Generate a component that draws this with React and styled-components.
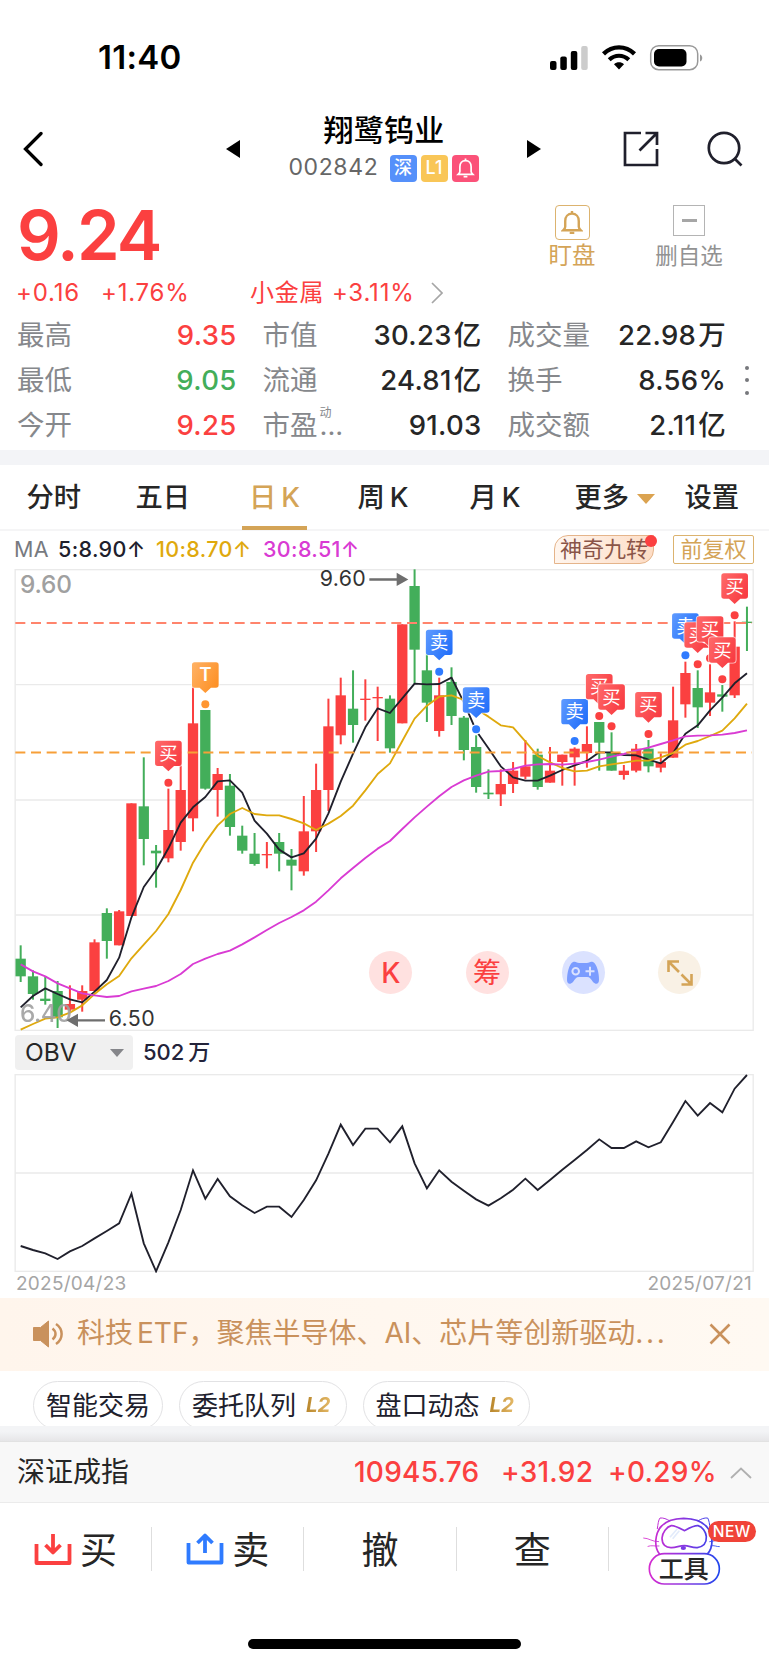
import React from "react";
import styled, { createGlobalStyle } from "styled-components";

const RED = "#fb4040";
const GREEN = "#43ae5a";
const GOLD = "#d4a457";

// one candle: [high, body top, body bottom, low, up?]
const candles = [
  [1141, 1181, 1234, 1251, 0], [1216, 1234, 1287, 1304, 0], [1234, 1301, 1308, 1319, 0],
  [1248, 1278, 1357, 1389, 0], [1261, 1317, 1334, 1340, 1], [1261, 1278, 1304, 1340, 1],
  [1123, 1132, 1278, 1278, 1], [1030, 1044, 1128, 1181, 0], [1035, 1039, 1141, 1141, 1],
  [715, 715, 1053, 1053, 1], [577, 724, 822, 901, 0], [840, 857, 865, 968, 0],
  [671, 795, 880, 892, 1], [600, 675, 831, 857, 1], [364, 475, 760, 799, 1],
  [435, 435, 671, 674, 0], [609, 627, 675, 755, 1], [627, 662, 786, 812, 0],
  [782, 812, 857, 866, 0], [804, 866, 897, 902, 0], [831, 867, 871, 910, 1],
  [804, 831, 866, 919, 0], [852, 884, 902, 976, 0], [693, 799, 919, 932, 1],
  [596, 675, 799, 861, 1], [401, 484, 675, 738, 1], [338, 391, 511, 538, 1],
  [316, 431, 480, 533, 0], [343, 401, 405, 467, 1], [365, 396, 400, 528, 1],
  [391, 401, 550, 563, 0], [178, 178, 475, 475, 1], [13, 63, 254, 356, 0],
  [250, 316, 413, 471, 0], [338, 391, 498, 515, 1], [307, 351, 453, 480, 0],
  [453, 458, 555, 586, 0], [511, 546, 666, 683, 0], [613, 683, 688, 702, 0],
  [613, 657, 688, 723, 1], [591, 617, 657, 684, 1], [525, 604, 635, 643, 1],
  [551, 569, 666, 674, 0], [546, 617, 653, 653, 1], [569, 569, 591, 662, 1],
  [547, 551, 577, 662, 1], [484, 537, 564, 608, 1], [471, 471, 533, 617, 0],
  [502, 564, 617, 617, 0], [600, 617, 630, 644, 1], [537, 551, 617, 622, 1],
  [525, 551, 604, 622, 0], [565, 591, 608, 622, 1], [365, 466, 578, 578, 1],
  [290, 324, 418, 458, 1], [316, 369, 427, 489, 0], [298, 382, 413, 453, 1],
  [360, 388, 395, 440, 0], [169, 245, 391, 399, 1], [125, 170, 174, 258, 0],
];

const ma5 = [
  1327, 1293, 1270, 1287, 1303, 1312, 1280, 1245, 1178, 1057, 966, 915, 850, 773, 727,
  696, 649, 646, 683, 767, 806, 854, 877, 865, 821, 745, 650, 566, 487, 430, 444, 400,
  356, 358, 357, 338, 412, 497, 550, 604, 637, 647, 647, 632, 615, 601, 588, 562, 562,
  570, 571, 584, 595, 564, 506, 481, 436, 398, 355, 325,
];
const ma10 = [
  1394, 1377, 1361, 1357, 1343, 1321, 1287, 1258, 1233, 1180, 1139, 1098, 1047, 975, 893,
  832, 781, 747, 729, 747, 751, 751, 762, 775, 795, 776, 753, 722, 676, 627, 595, 528,
  461, 422, 395, 391, 405, 432, 455, 481, 487, 529, 573, 592, 609, 619, 617, 604, 598,
  593, 587, 587, 577, 564, 539, 528, 513, 497, 460, 416,
];
const ma30 = [
  1198, 1219, 1234, 1255, 1270, 1285, 1291, 1296, 1293, 1279, 1271, 1263, 1248, 1227,
  1197, 1181, 1167, 1157, 1138, 1117, 1095, 1074, 1056, 1036, 1010, 976, 940, 909, 879,
  851, 828, 792, 757, 725, 694, 666, 646, 632, 620, 618, 612, 602, 598, 597, 599, 596,
  591, 584, 575, 567, 556, 548, 537, 526, 514, 512, 511, 509, 504, 496,
];
const obv = [
  648, 660, 670, 687, 664, 648, 625, 603, 580, 491, 640, 724, 637, 540, 421, 506, 447,
  499, 526, 549, 530, 530, 561, 510, 451, 371, 284, 345, 296, 296, 337, 289, 400, 475,
  421, 455, 482, 508, 527, 505, 479, 446, 480, 450, 419, 390, 360, 328, 354, 354, 334,
  352, 337, 276, 213, 257, 219, 247, 176, 135,
];

const trades = [
  { i: 12, y: 527, t: "买" },
  { i: 15, y: 292, t: "T" },
  { i: 34, y: 194, t: "卖" },
  { i: 37, y: 367, t: "卖" },
  { i: 45, y: 402, t: "卖" },
  { i: 47, y: 327, t: "买" },
  { i: 48, y: 358, t: "买" },
  { i: 51, y: 381, t: "买" },
  { i: 54, y: 145, t: "卖" },
  { i: 55, y: 172, t: "买" },
  { i: 56, y: 154, t: "买" },
  { i: 57, y: 217, t: "买" },
  { i: 58, y: 25, t: "买" },
];
const tradeColors = {
  买: { id: "buy", from: "#ff6a6a", to: "#f83c42", dot: "#fb4040" },
  卖: { id: "sell", from: "#5f9bff", to: "#2470fa", dot: "#2f7bff" },
  T: { id: "tt", from: "#ffb266", to: "#fd9228", dot: "#ff9632" },
};

const stats = [
  ["最高", "9.35", RED, "市值", "30.23亿", "成交量", "22.98万"],
  ["最低", "9.05", GREEN, "流通", "24.81亿", "换手", "8.56%"],
  ["今开", "9.25", RED, "市盈", "91.03", "成交额", "2.11亿"],
];

// the charts are drawn at 3 units per px
const cx = (i) => 62 + i * 36.93;
const line = (arr) => arr.map((y, i) => `${cx(i).toFixed(1)},${y}`).join(" ");

// number and its unit, with the small gap between them
const Amount = ({ text }) => {
  const m = text.match(/^([\d.]+)([亿万])$/);
  if (!m) return text;
  return (
    <>
      {m[1]}
      <Unit $gap={2}>{m[2]}</Unit>
    </>
  );
};

const Trade = ({ i, y, t }) => {
  const c = tradeColors[t];
  const x = cx(i);
  return (
    <g>
      <circle cx={x} cy={y + 126} r="16" fill="#fff" />
      <circle cx={x} cy={y + 126} r="12" fill={c.dot} />
      <path
        d={`M${x - 32} ${y} h64 q8 0 8 8 v60 q0 8 -8 8 h-15 l-17 16 l-17 -16 h-15 q-8 0 -8 -8 v-60 q0 -8 8 -8z`}
        fill={`url(#${c.id})`}
        stroke="#fff"
        strokeOpacity="0.75"
        strokeWidth="5"
        paintOrder="stroke"
      />
      <text
        x={x}
        y={y + (t === "T" ? 57 : 58)}
        fontSize={t === "T" ? 56 : 55}
        fontWeight={t === "T" ? 600 : 400}
        fill="#fff"
        textAnchor="middle"
      >
        {t}
      </text>
    </g>
  );
};

const KChart = () => (
  <Drawing $h={462} viewBox="0 12 2307 1386">
    <defs>
      {Object.values(tradeColors).map((c) => (
        <linearGradient key={c.id} id={c.id} x1="0" y1="0" x2="1" y2="0.6">
          <stop offset="0" stopColor={c.from} />
          <stop offset="1" stopColor={c.to} />
        </linearGradient>
      ))}
    </defs>
    <g stroke="#eaeaea" strokeWidth="4" fill="none">
      <rect x="45.5" y="14" width="2214" height="1382" />
      <path d="M46 359H2260M46 705H2260M46 1050H2260" />
    </g>
    {candles.map(([h, t, b, l, up], i) => (
      <g key={i} fill={up ? RED : GREEN}>
        <rect x={cx(i) - 3} y={h} width="6" height={l - h} />
        <rect x={cx(i) - 15.5} y={t} width="31" height={b - t} />
      </g>
    ))}
    <g fill="none" strokeWidth="5.6" strokeLinejoin="round">
      <polyline points={line(ma5)} stroke="#20202c" />
      <polyline points={line(ma10)} stroke="#dfa90d" />
      <polyline points={line(ma30)} stroke="#d93bd3" />
    </g>
    <g strokeWidth="6" strokeDasharray="30 17">
      <path d="M46 174H2256" stroke="#ff846c" />
      <path d="M46 562.5H2256" stroke="#f79f38" />
    </g>
    <g fill="#a0a0a0" fontSize="73" fontWeight="500">
      <text x="60" y="84" textLength="156">9.60</text>
      <text x="60" y="1371" textLength="156" opacity="0.9">6.40</text>
    </g>
    <g fill="#333" fontSize="64">
      <text x="959" y="62" textLength="138">9.60</text>
      <text x="326" y="1384" textLength="138">6.50</text>
    </g>
    <g stroke="#6e6e6e" strokeWidth="7" fill="#6e6e6e">
      <path d="M1108 43.500H1200M216 1366H315" />
      <path stroke="none" d="M1190 23L1225 43.500L1190 63ZM234 1346L199 1366L234 1386Z" />
    </g>
    {trades.map((m) => (
      <Trade key={m.i} {...m} />
    ))}
  </Drawing>
);

const ObvChart = () => (
  <Drawing $h={201} viewBox="0 126 2307 603">
    <g stroke="#eaeaea" strokeWidth="4" fill="none">
      <rect x="45.500" y="134" width="2214" height="590" />
      <path d="M46 429H2260" />
    </g>
    <polyline points={line(obv)} fill="none" stroke="#20202c" strokeWidth="5.6" />
  </Drawing>
);

const BellPath = () => (
  <>
    <path d="M12 3.500c-4 0-6.500 3-6.500 7v5.500c0 1.500-1 2.500-2 3.500h17c-1-1-2-2-2-3.500v-5.500c0-4-2.500-7-6.500-7z" />
    <path d="M12 1v2.500M9.800 22h4.400" />
  </>
);

const Cat = () => (
  <svg width="79" height="70" viewBox="0 0 237 210" fill="none">
    <defs>
      <linearGradient id="cat" gradientUnits="userSpaceOnUse" x1="20" y1="0" x2="232" y2="0">
        <stop offset="0" stopColor="#d62bd0" />
        <stop offset="0.5" stopColor="#8a36e0" />
        <stop offset="1" stopColor="#1f46ee" />
      </linearGradient>
    </defs>
    <g stroke="url(#cat)" strokeWidth="5" strokeLinecap="round" strokeLinejoin="round">
      <path d="M52 113C40 98 40 78 43 62C50 25 78 8 125 7C170 8 200 25 208 60C212 80 210 98 197 113" />
      <path strokeWidth="3" d="M46 38C48 25 49 12 54 6C64 5 74 9 82 14M204 38C203 25 201 12 197 6C187 5 177 9 169 14" />
      <path d="M127 44C112 36 98 28 88 29C74 32 61 50 60 66C60 86 71 96 89 95C105 94 112 89 127 89C142 89 149 96 166 95C184 92 194 80 193 62C192 48 181 32 168 29C156 28 142 36 127 44Z" />
      <path strokeWidth="2.500" d="M5 66C20 66 32 78 50 77M18 91C28 87 38 91 51 90M203 77C214 75 222 74 228 72M206 90C216 86 224 93 232 92" />
      <rect x="22" y="113" width="210" height="91" rx="45" />
    </g>
    <path d="M84 64L106 38M92 68L112 44" stroke="#e2ebfb" strokeWidth="5" />
    <ellipse cx="124" cy="96" rx="8" ry="6" fill="#7a3be4" />
  </svg>
);

const App = () => {
  return (
    <>
      <GlobalStyle />
      <Page>
        <StatusBar>
          <Clock>11:40</Clock>
          <svg width="156" height="28" viewBox="0 0 156 28">
            <rect x="1" y="17" width="6.500" height="9" rx="2" />
            <rect x="11.300" y="12.500" width="6.500" height="13.500" rx="2" />
            <rect x="21.800" y="7" width="6.500" height="19" rx="2" />
            <rect x="32.200" y="2" width="6.500" height="24" rx="2" fill="#ccc" />
            <g fill="none" stroke="#000">
              <path d="M54.500 9.800C63.500 1.200 76.500 1.200 85.500 9.800" strokeWidth="4.400" />
              <path d="M60.200 15.800C66 10.400 74 10.400 79.800 15.800" strokeWidth="4.200" />
            </g>
            <path d="M65 20.200C68 17.600 72 17.600 75 20.200L70 25.500Z" />
            <rect x="101.700" y="1.700" width="47" height="24" rx="8" fill="none" stroke="#999" strokeWidth="1.500" />
            <rect x="105" y="5" width="32.500" height="17.500" rx="5" />
            <path d="M151 10.500c3 1 3 6 0 7z" fill="#999" />
          </svg>
        </StatusBar>

        <Header>
          <BackIcon viewBox="0 0 20 36">
            <path d="M18 2.500L2.500 18L18 33.500" />
          </BackIcon>
          <PrevIcon viewBox="0 0 14 18">
            <path d="M0 9L14 0V18Z" />
          </PrevIcon>
          <TitleBox>
            <StockName>翔鹭钨业</StockName>
            <CodeRow>
              <Code>002842</Code>
              <Badge $bg="#5590fa">深</Badge>
              <Badge $bg="#f9c657">L1</Badge>
              <Badge $bg="#fb5279">
                <svg width="19" height="22" viewBox="1 0 22 24" fill="none" stroke="#fff" strokeWidth="2">
                  <BellPath />
                </svg>
              </Badge>
            </CodeRow>
          </TitleBox>
          <NextIcon viewBox="0 0 14 18">
            <path d="M14 9L0 0V18Z" />
          </NextIcon>
          <ShareIcon viewBox="0 0 36 36">
            <path d="M18 2H2V34H34V18M22.500 2H34V14M34 2L16.500 19.500" />
          </ShareIcon>
          <SearchIcon viewBox="0 0 36 36">
            <circle cx="17" cy="17" r="15.200" />
            <path d="M27.500 27.500L34.500 34.500" />
          </SearchIcon>
        </Header>

        <PriceRow>
          <Price>9.24</Price>
          <Watch>
            <WatchBox>
              <svg width="22" height="25" viewBox="1.500 0 21 24" fill="none" stroke={GOLD} strokeWidth="2.300">
                <BellPath />
              </svg>
            </WatchBox>
            <span>盯盘</span>
          </Watch>
          <Remove>
            <RemoveBox />
            <span>删自选</span>
          </Remove>
        </PriceRow>
        <ChangeRow>
          <Change $w={85}>+0.16</Change>
          <Change $w={149}>+1.76%</Change>
          <Change $w={181}>小金属 +3.11%</Change>
          <svg width="12" height="22" viewBox="0 0 12 22" fill="none" stroke="#a6a6a6" strokeWidth="1.700">
            <path d="M1 1L11 11L1 21" />
          </svg>
        </ChangeRow>

        <StatsWrap>
          <StatsGrid>
            {stats.map((s, i) => (
              <React.Fragment key={s[0]}>
                <StatLabel>{s[0]}</StatLabel>
                <StatValue $color={s[2]}>{s[1]}</StatValue>
                <StatLabel>
                  {s[3]}
                  {i === 2 && (
                    <Suffix>
                      ...<Dyn>动</Dyn>
                    </Suffix>
                  )}
                </StatLabel>
                <StatValue>
                  <Amount text={s[4]} />
                </StatValue>
                <StatLabel>{s[5]}</StatLabel>
                <StatValue>
                  <Amount text={s[6]} />
                </StatValue>
              </React.Fragment>
            ))}
          </StatsGrid>
          <MoreDots>
            <i />
            <i />
            <i />
          </MoreDots>
        </StatsWrap>
        <Band />

        <Tabs>
          <Tab $w={109}>分时</Tab>
          <Tab $w={106}>五日</Tab>
          <ActiveTab>日<K>K</K></ActiveTab>
          <Tab $w={112} $ml={51}>周<K>K</K></Tab>
          <Tab $w={105}>月<K>K</K></Tab>
          <Tab $w={110}>
            更多
            <Caret $w={19} $h={10} $c="#dba350" $ml={8} />
          </Tab>
          <Tab $w={60}>设置</Tab>
        </Tabs>

        <MaRow>
          <Ma $w={44} $c="#777a80">MA</Ma>
          <Ma $w={98} $c="#20202c" $b>5:8.90↑</Ma>
          <Ma $w={107} $c="#dfa90d" $b>10:8.70↑</Ma>
          <Ma $w={291} $c="#d93bd3" $b>30:8.51↑</Ma>
          <NineTag>神奇九转</NineTag>
          <AdjustTag>前复权</AdjustTag>
        </MaRow>

        <ChartBox>
          <KChart />
          <FloatTools>
            <RoundTool $bg="#ffe1e0">K</RoundTool>
            <RoundTool $bg="#ffe1e0" $light>筹</RoundTool>
            <RoundTool $bg="#dbe2ff">
              <svg width="32" height="24" viewBox="0 0 32 24">
                <path
                  d="M6 1C9 0 10 2 12 2h8c2 0 3-2 6-1c4 2 6 11 6 18c0 4-3 5-6 2c-2-3-3-5-6-5h-8c-3 0-4 2-6 5c-3 3-6 2-6-2C0 12 2 3 6 1z"
                  fill="#7b9cff"
                />
                <circle cx="8.700" cy="10.300" r="3.300" fill="none" stroke="#dbe2ff" strokeWidth="2" />
                <path d="M23 5.800v9M18.500 10.300h9" stroke="#dbe2ff" strokeWidth="2" />
              </svg>
            </RoundTool>
            <RoundTool $bg="#f9f1e5">
              <svg width="26" height="26" viewBox="0 0 26 26" fill="none" stroke={GOLD} strokeWidth="2.600">
                <path d="M1.500 12V1.500H12M1.500 1.500L12 12M14.500 24.500H24.500V14M14.500 14.500L24.500 24.500" />
              </svg>
            </RoundTool>
          </FloatTools>
        </ChartBox>

        <ObvRow>
          <ObvSelect>
            OBV
            <Caret $w={15} $h={8} $c="#85868a" $ml={0} />
          </ObvSelect>
          <ObvValue>
            502<Unit>万</Unit>
          </ObvValue>
        </ObvRow>
        <ObvChart />
        <Dates>
          <span>2025/04/23</span>
          <span>2025/07/21</span>
        </Dates>

        <Banner>
          <svg width="33" height="28" viewBox="0 0 33 28" fill="none" stroke="#c9915c" strokeWidth="2.500">
            <path d="M1.500 7.500h7L16.500 1v26l-8-6.500h-7z" fill="#c9915c" strokeWidth="1" />
            <path d="M20.500 8.500c4 3 4 8 0 11M24 4c7.500 5 7.500 15 0 20" />
          </svg>
          <BannerText>
            科技<Unit>ETF</Unit>，聚焦半导体、AI、芯片等创新驱动<Ellipsis>...</Ellipsis>
          </BannerText>
          <svg width="22" height="22" viewBox="0 0 22 22" stroke="#c9915c" strokeWidth="2.600">
            <path d="M1.500 1.500L20.500 20.500M20.500 1.500L1.500 20.500" />
          </svg>
        </Banner>

        <Pills>
          <Pill $w={130}>智能交易</Pill>
          <Pill $w={167.5}>
            委托队列<Level>L2</Level>
          </Pill>
          <Pill $w={167.5}>
            盘口动态<Level>L2</Level>
          </Pill>
        </Pills>
        <Band $shade />

        <IndexBar>
          <IndexName>深证成指</IndexName>
          <IndexNum $w={147}>10945.76</IndexNum>
          <IndexNum $w={107}>+31.92</IndexNum>
          <IndexNum $w={122}>+0.29%</IndexNum>
          <svg width="22" height="12" viewBox="0 0 22 12" fill="none" stroke="#b0b0b0" strokeWidth="1.800">
            <path d="M1 11L11 1.500L21 11" />
          </svg>
        </IndexBar>

        <TradeBar>
          <TradeCell>
            <svg width="38" height="34" viewBox="0 0 38 34" fill="none" stroke={RED} strokeWidth="3.800">
              <path d="M2.500 12V31H35.500V12M19 2V19M11.500 13L19 20.500L26.500 13" strokeLinejoin="round" />
            </svg>
            <TradeName>买</TradeName>
          </TradeCell>
          <Divider />
          <TradeCell>
            <svg width="38" height="34" viewBox="0 0 38 34" fill="none" stroke="#2f7bff" strokeWidth="3.800">
              <path d="M2.500 11V30.500H35.500V11M19 21V4M11.500 11L19 3.500L26.500 11" strokeLinejoin="round" />
            </svg>
            <TradeName>卖</TradeName>
          </TradeCell>
          <Divider />
          <TradeCell>
            <TradeName>撤</TradeName>
          </TradeCell>
          <Divider />
          <TradeCell>
            <TradeName>查</TradeName>
          </TradeCell>
          <Divider />
          <ToolCell>
            <Cat />
            <ToolText>工具</ToolText>
            <NewBadge>NEW</NewBadge>
          </ToolCell>
        </TradeBar>
        <HomeBar />
      </Page>
    </>
  );
};

export default App;

const GlobalStyle = createGlobalStyle`
  * {
    box-sizing: border-box;
  }
  body {
    margin: 0;
    background: #fff;
    font-family: "Inter", "Noto Sans CJK SC", sans-serif;
    line-height: 1.2;
  }
  svg {
    display: block;
    flex-shrink: 0;
  }
`;

const Page = styled.div`
  width: 769px;
  height: 1665px;
  overflow: hidden;
  background: #fff;
  color: #262626;
  white-space: nowrap;
`;
const StatusBar = styled.div`
  height: 115px;
  display: flex;
  align-items: center;
  justify-content: space-between;
  padding: 0 64px 0 98px;
`;
const Clock = styled.div`
  padding-top: 1px;
  font-size: 33px;
  font-weight: 600;
  letter-spacing: 0.3px;
  color: #000;
`;

const Header = styled.div`
  height: 68px;
  display: flex;
  align-items: center;
  padding-left: 23px;
`;
const BackIcon = styled.svg`
  width: 20px;
  height: 36px;
  fill: none;
  stroke: #000;
  stroke-width: 3.3;
  stroke-linecap: round;
`;
const PrevIcon = styled.svg`
  width: 14px;
  height: 18px;
  margin-left: 183px;
`;
const NextIcon = styled(PrevIcon)`
  margin-left: 0;
`;
const TitleBox = styled.div`
  width: 287px;
  display: flex;
  flex-direction: column;
  align-items: center;
  gap: 8px;
`;
const StockName = styled.div`
  height: 30px;
  line-height: 30px;
  padding-left: 1px;
  font-size: 30px;
  font-weight: 500;
  letter-spacing: 0.2px;
  color: #000;
`;
const CodeRow = styled.div`
  height: 30px;
  display: flex;
  align-items: center;
  gap: 4px;
`;
const Code = styled.div`
  width: 97px;
  font-size: 23px;
  letter-spacing: 0.6px;
  color: #666;
`;
const Badge = styled.div`
  width: 27px;
  height: 27px;
  border-radius: 4px;
  display: flex;
  align-items: center;
  justify-content: center;
  font-size: 18px;
  font-weight: 500;
  line-height: 1;
  color: #fff;
  background: ${(p) => p.$bg};
`;
const ShareIcon = styled.svg`
  width: 36px;
  height: 36px;
  margin-left: 82px;
  fill: none;
  stroke: #20202c;
  stroke-width: 2.7;
`;
const SearchIcon = styled(ShareIcon)`
  margin-left: 48px;
`;

const PriceRow = styled.div`
  height: 98px;
  display: flex;
  align-items: flex-start;
`;
const Price = styled.div`
  width: 530px;
  height: 105px;
  line-height: 105px;
  padding-left: 17px;
  font-size: 68.5px;
  font-weight: 600;
  letter-spacing: -1.9px;
  color: ${RED};
`;
const Watch = styled.div`
  width: 84px;
  padding-top: 22px;
  display: flex;
  flex-direction: column;
  align-items: center;
  font-size: 23.5px;
  line-height: 31px;
  color: ${GOLD};
`;
const WatchBox = styled.div`
  width: 35px;
  height: 35px;
  border: 1.3px solid #dcb36f;
  border-radius: 4px;
  display: flex;
  align-items: center;
  justify-content: center;
`;
const Remove = styled(Watch)`
  width: 150px;
  font-size: 22.5px;
  line-height: 30px;
  color: #929292;
`;
const RemoveBox = styled.div`
  width: 32px;
  height: 31px;
  margin-bottom: 5px;
  border: 1.5px solid #b4b4b4;
  display: flex;
  align-items: center;
  justify-content: center;
  &::after {
    content: "";
    width: 15px;
    height: 3px;
    background: #a6a6a6;
  }
`;
const ChangeRow = styled.div`
  height: 24px;
  display: flex;
  align-items: center;
  padding-left: 16px;
`;
const Change = styled.div`
  width: ${(p) => p.$w}px;
  font-size: 24px;
  line-height: 24px;
  letter-spacing: 0.8px;
  color: ${RED};
`;

const StatsWrap = styled.div`
  height: 145px;
  padding: 8px 0 0 17px;
  display: flex;
`;
const StatsGrid = styled.div`
  display: grid;
  grid-template-columns: 80px 139.5px 99.5px 145.500px 105.500px 139px;
  grid-template-rows: repeat(3, 45px);
`;
const StatLabel = styled.div`
  font-size: 27.5px;
  line-height: 45px;
  color: #86888c;
  &:nth-child(6n + 3),
  &:nth-child(6n + 5) {
    margin-left: 26px;
  }
`;
const StatValue = styled.div`
  font-size: 27.5px;
  font-weight: 500;
  letter-spacing: 0.3px;
  line-height: 45px;
  text-align: right;
  color: ${(p) => p.$color || "#262626"};
`;
const Unit = styled.span`
  margin-left: ${(p) => p.$gap || 4}px;
`;
const Suffix = styled.span`
  position: relative;
  margin-left: 2px;
`;
const Dyn = styled.span`
  position: absolute;
  left: 0;
  top: -2px;
  font-size: 12px;
  line-height: 14px;
`;
const MoreDots = styled.div`
  margin-left: 19px;
  padding-top: 53px;
  display: flex;
  flex-direction: column;
  gap: 8.3px;
  i {
    width: 4px;
    height: 4px;
    border-radius: 50%;
    background: #77787c;
  }
`;
const Band = styled.div`
  height: 15px;
  background: ${(p) => (p.$shade ? "linear-gradient(#f3f4f6 35%, #e6e6e8)" : "#f3f4f7")};
`;

const Tabs = styled.div`
  height: 66px;
  display: flex;
  padding-left: 26.5px;
  border-bottom: 2px solid #f5f5f6;
`;
const Tab = styled.div`
  width: ${(p) => p.$w}px;
  margin-left: ${(p) => p.$ml || 0}px;
  height: 65px;
  padding-top: 2px;
  display: flex;
  align-items: center;
  font-size: 27.3px;
  font-weight: 500;
`;
const ActiveTab = styled(Tab)`
  width: 65px;
  padding: 6px 0 0 7.5px;
  border-bottom: 4px solid ${GOLD};
  color: ${GOLD};
`;
const K = styled.span`
  margin-left: 5px;
`;
const Caret = styled.i`
  width: 0;
  height: 0;
  margin-left: ${(p) => p.$ml}px;
  border: ${(p) => p.$w / 2}px solid transparent;
  border-top: ${(p) => p.$h}px solid ${(p) => p.$c};
  border-bottom: 0;
`;

const MaRow = styled.div`
  height: 38px;
  display: flex;
  align-items: center;
  padding: 0 0 1px 14px;
`;
const Ma = styled.div`
  width: ${(p) => p.$w}px;
  font-size: 21.5px;
  font-weight: ${(p) => (p.$b ? 500 : 400)};
  letter-spacing: 0.35px;
  color: ${(p) => p.$c};
`;
const NineTag = styled.div`
  position: relative;
  width: 100px;
  height: 29px;
  border: 1.3px solid #e5b48a;
  border-radius: 14px 0 14px 0;
  background: linear-gradient(100deg, #fff6ef, #fddcc4);
  font-size: 22px;
  line-height: 27px;
  text-align: center;
  color: #8a5548;
  &::after {
    content: "";
    position: absolute;
    top: -1px;
    right: -4px;
    width: 12px;
    height: 12px;
    border-radius: 50%;
    background: ${RED};
  }
`;
const AdjustTag = styled.div`
  width: 81px;
  height: 29px;
  margin-left: 19px;
  border: 1.3px solid #dcb36f;
  border-radius: 2px;
  font-size: 22px;
  line-height: 27px;
  text-align: center;
  color: ${GOLD};
`;

const ChartBox = styled.div`
  position: relative;
`;
const Drawing = styled.svg`
  width: 769px;
  height: ${(p) => p.$h}px;
`;
const FloatTools = styled.div`
  position: absolute;
  left: 369.3px;
  top: 382.3px;
  display: flex;
  gap: 53.3px;
`;
const RoundTool = styled.div`
  width: 43px;
  height: 43px;
  border-radius: 50%;
  display: flex;
  align-items: center;
  justify-content: center;
  font-size: 28px;
  font-weight: ${(p) => (p.$light ? 400 : 500)};
  line-height: 1;
  color: ${RED};
  background: ${(p) => p.$bg};
`;

const ObvRow = styled.div`
  height: 41px;
  padding: 4px 0 0 15px;
  display: flex;
`;
const ObvSelect = styled.div`
  width: 118px;
  height: 35px;
  padding: 0 9px 0 10px;
  border-radius: 4px;
  background: #f0f0f0;
  display: flex;
  align-items: center;
  justify-content: space-between;
  font-size: 24.5px;
  line-height: 33px;
`;
const ObvValue = styled.div`
  margin-left: 10px;
  font-size: 22px;
  font-weight: 500;
  line-height: 34px;
  color: #23233a;
`;
const Dates = styled.div`
  height: 25px;
  padding: 0 17px 0 16px;
  display: flex;
  justify-content: space-between;
  font-size: 19px;
  line-height: 22px;
  letter-spacing: 0.25px;
  color: #a5a5a5;
`;

const Banner = styled.div`
  height: 73px;
  padding: 0 38px 1px 32px;
  display: flex;
  align-items: center;
  background: linear-gradient(90deg, #fff5ec, #fff9f2);
`;
const BannerText = styled.div`
  width: 632px;
  margin-left: 12px;
  font-size: 28px;
  color: #c9915c;
`;
const Ellipsis = styled.span`
  letter-spacing: 2.7px;
`;
const Pills = styled.div`
  height: 55px;
  padding: 10px 0 0 33px;
  display: flex;
  gap: 16px;
  overflow: hidden;
`;
const Pill = styled.div`
  width: ${(p) => p.$w}px;
  height: 49px;
  flex-shrink: 0;
  border: 1.3px solid #e2e2e4;
  border-radius: 25px;
  display: flex;
  align-items: center;
  padding-left: 12px;
  font-size: 26px;
  line-height: 46px;
  color: #20202c;
`;
const Level = styled.span`
  margin-left: 10px;
  padding-right: 2px;
  font-size: 20.5px;
  font-weight: 700;
  font-style: italic;
  line-height: 1;
  background: linear-gradient(90deg, #b8862b, #e8bd6c);
  background-clip: text;
  color: transparent;
`;

const IndexBar = styled.div`
  height: 62px;
  padding: 2px 0 0 17px;
  display: flex;
  align-items: center;
  border-top: 1px solid #e2e2e2;
  border-bottom: 1.5px solid #ebebeb;
  background: #f8f8f8;
`;
const IndexName = styled.div`
  width: 337px;
  font-size: 28px;
`;
const IndexNum = styled.div`
  width: ${(p) => p.$w}px;
  font-size: 28px;
  font-weight: 450;
  letter-spacing: 0.25px;
  color: ${RED};
`;

const TradeBar = styled.div`
  height: 92px;
  display: flex;
  align-items: center;
`;
const TradeCell = styled.div`
  width: 151.2px;
  display: flex;
  align-items: center;
  justify-content: center;
  gap: 8px;
`;
const TradeName = styled.span`
  padding-top: 4px;
  font-size: 37px;
`;
const Divider = styled.div`
  width: 1px;
  height: 44px;
  background: #dedede;
`;
const ToolCell = styled.div`
  position: relative;
  align-self: stretch;
  width: 160px;
  padding: 13px 0 0 33px;
`;
const ToolText = styled.div`
  position: absolute;
  left: 40px;
  top: 51px;
  width: 70px;
  font-size: 25px;
  font-weight: 500;
  line-height: 31px;
  text-align: center;
`;
const NewBadge = styled.div`
  position: absolute;
  left: 99px;
  top: 18px;
  width: 48px;
  height: 21px;
  border-radius: 11px;
  background: #f04338;
  color: #fff;
  font-size: 15.5px;
  font-weight: 500;
  letter-spacing: 0.5px;
  line-height: 21px;
  text-align: center;
`;
const HomeBar = styled.div`
  width: 273px;
  height: 10px;
  margin: 44px auto 0;
  border-radius: 5px;
  background: #000;
`;
